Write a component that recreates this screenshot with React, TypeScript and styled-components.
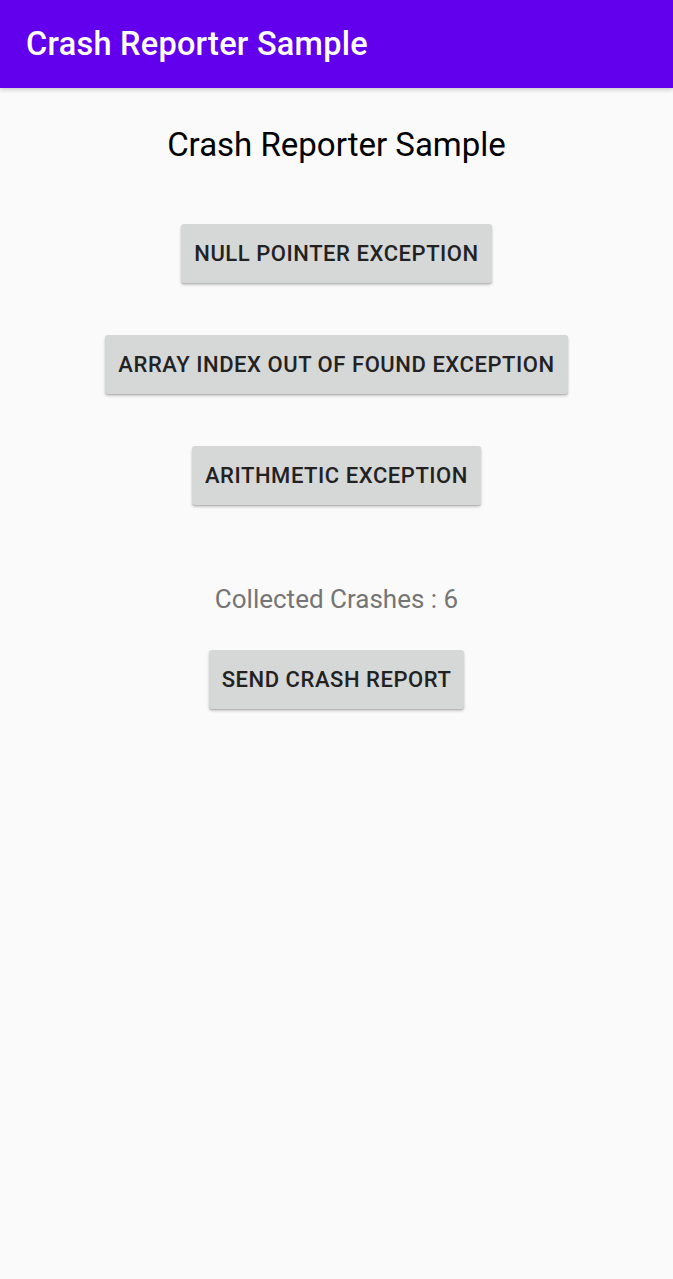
import React from "react";
import styled, { createGlobalStyle } from "styled-components";

const Global = createGlobalStyle`
  html, body { margin: 0; padding: 0; background: #fafafa; }
  body { font-family: Roboto, "Noto Sans", sans-serif; }
`;

const Screen = styled.div`
  width: 673px;
  min-height: 1279px;
  background: #fafafa;
  display: flex;
  flex-direction: column;
`;

const AppBar = styled.header`
  height: 88px;
  background: #6200ee;
  display: flex;
  align-items: center;
  padding-left: 26px;
  box-shadow: 0 2px 4px rgba(0, 0, 0, 0.18);
  position: relative;
  z-index: 1;
`;

const AppTitle = styled.h1`
  margin: 0;
  color: #ffffff;
  font-family: Roboto, sans-serif;
  font-weight: 500;
  font-size: 32.5px;
  letter-spacing: 0.25px;
`;

const Content = styled.main`
  display: flex;
  flex-direction: column;
  align-items: center;
  padding-top: 36px;
`;

const Heading = styled.div`
  font-family: Roboto, sans-serif;
  font-size: 33px;
  color: #000000;
  line-height: 42px;
  margin-bottom: 58px;
`;

const Button = styled.button<{ $gap: number }>`
  height: 59px;
  padding: 0 13px;
  border: none;
  border-radius: 3px;
  background: #d6d7d7;
  color: #222222;
  font-family: Roboto, sans-serif;
  font-weight: 500;
  font-size: 22px;
  letter-spacing: 0.55px;
  box-shadow: 0 2px 3px rgba(0, 0, 0, 0.2), 0 1px 1px rgba(0, 0, 0, 0.12);
  margin-bottom: ${(p) => p.$gap}px;
  cursor: pointer;
`;

const Counter = styled.div`
  font-family: Roboto, sans-serif;
  font-size: 26px;
  color: #757575;
  line-height: 34px;
  margin-bottom: 34px;
`;

export default function App() {
  return (
    <Screen>
      <Global />
      <AppBar>
        <AppTitle>Crash Reporter Sample</AppTitle>
      </AppBar>
      <Content>
        <Heading>Crash Reporter Sample</Heading>
        <Button $gap={52}>NULL POINTER EXCEPTION</Button>
        <Button $gap={52}>ARRAY INDEX OUT OF FOUND EXCEPTION</Button>
        <Button $gap={77}>ARITHMETIC EXCEPTION</Button>
        <Counter>Collected Crashes : 6</Counter>
        <Button $gap={0}>SEND CRASH REPORT</Button>
      </Content>
    </Screen>
  );
}
